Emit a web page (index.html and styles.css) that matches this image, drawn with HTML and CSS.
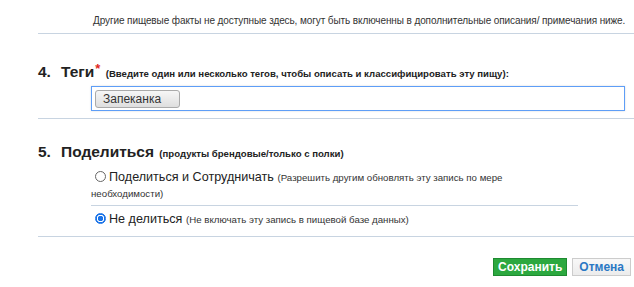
FILE: index.html
```html
<!DOCTYPE html>
<html lang="ru">
<head>
    <meta charset="UTF-8">
    <meta name="viewport" content="width=device-width, initial-scale=1.0">
    <title>Редактирование продукта</title>
    <link rel="stylesheet" href="styles.css">
</head>
<body>
    <div class="form">
        <p class="note">Другие пищевые факты не доступные здесь, могут быть включенны в дополнительные описания/ примечания ниже.</p>
        <hr class="sep">

        <div class="section">
            <h2 class="heading"><span class="num">4.</span>Теги<span class="req">*</span> <span class="hint">(Введите один или несколько тегов, чтобы описать и классифицировать эту пищу):</span></h2>
            <div class="tags-input">
                <span class="tag">Запеканка</span>
            </div>
        </div>
        <hr class="sep">

        <div class="section section-share">
            <h2 class="heading"><span class="num">5.</span>Поделиться <span class="hint">(продукты брендовые/только с полки)</span></h2>
            <div class="options">
                <label class="option"><input type="radio" name="share" value="share"><span class="option-title">Поделиться и Сотрудничать</span> <span class="option-desc">(Разрешить другим обновлять эту запись по мере необходимости)</span></label>
                <label class="option"><input type="radio" name="share" value="private" checked><span class="option-title">Не делиться</span> <span class="option-desc">(Не включать эту запись в пищевой базе данных)</span></label>
            </div>
        </div>
        <hr class="sep sep-last">

        <div class="actions">
            <button class="btn btn-save">Сохранить</button>
            <button class="btn btn-cancel">Отмена</button>
        </div>
    </div>
</body>
</html>
```

FILE: styles.css
```css
body {
    margin: 0;
    font-family: "Liberation Sans", Arial, sans-serif;
    color: #333;
    background: #fff;
}
.form {
    padding-left: 38px;
}
.note {
    margin: 15px 0 6px;
    padding-left: 55px;
    font-size: 10px;
    line-height: 12px;
    letter-spacing: -0.1px;
    color: #333;
    white-space: nowrap;
}
.sep {
    border: 0;
    border-top: 1px solid #c8d4e1;
    margin: 0;
}
.section {
    padding-top: 29px;
}
.section + .sep {
    margin-top: 7px;
}
.section + .sep-last {
    margin-top: 4px;
}
.heading {
    margin: 0;
    font-size: 15.5px;
    line-height: 18px;
    font-weight: bold;
    color: #222;
    white-space: nowrap;
}
.num {
    display: inline-block;
    width: 23px;
}
.req {
    color: #e0281c;
    font-size: 13px;
    line-height: 0;
    vertical-align: 4px;
    margin-left: 1px;
}
.hint {
    font-size: 9.6px;
    line-height: 10px;
    font-weight: bold;
    color: #222;
    margin-left: 1px;
}
.tags-input {
    margin: 5px 9px 0 53px;
    height: 19px;
    padding: 2px 3px;
    border: 1px solid #5e9ef7;
    box-shadow: 0 0 2px rgba(0, 0, 0, 0.15);
    background: #fff;
}
.tag {
    display: inline-block;
    height: 16px;
    line-height: 16px;
    padding: 0 18px 0 7px;
    font-size: 12px;
    color: #333;
    border: 1px solid #aaa;
    border-radius: 3px;
    background: linear-gradient(#f6f6f6, #dedede);
}
.section-share {
    padding-top: 24px;
}
.options {
    margin: 3px 56px 0 53px;
}
.option {
    display: block;
    padding: 5px 70px 5px 0;
    font-size: 13px;
    line-height: 15px;
    color: #333;
}
.option + .option {
    border-top: 1px solid #c8d4e1;
}
.option input {
    appearance: none;
    -webkit-appearance: none;
    width: 11px;
    height: 11px;
    margin: 0 3px 0 4px;
    border: 1px solid #666;
    border-radius: 50%;
    vertical-align: -1px;
    background: #fff;
}
.option input:checked {
    border-color: #1a73e8;
    background: radial-gradient(circle, #1a73e8 0 2.5px, #fff 3px 3.5px, #1a73e8 4px);
}
.option-title {
    font-size: 12.6px;
    color: #222;
}
.option-desc {
    font-size: 9.7px;
    line-height: 13px;
}
.actions {
    display: flex;
    justify-content: flex-end;
    gap: 5px;
    margin: 21px 3px 0 0;
}
.btn {
    font-family: "Liberation Sans", Arial, sans-serif;
    font-size: 12px;
    font-weight: bold;
    height: 18px;
    line-height: 16px;
    border-radius: 0;
    cursor: pointer;
}
.btn-save {
    color: #fff;
    background: #2ca83f;
    border: 1px solid #1e8a30;
    padding: 0 4px;
}
.btn-cancel {
    color: #2a78c4;
    background: linear-gradient(#f8f8f8, #ececec);
    border: 1px solid #ccc;
    padding: 0 6px;
}
```
